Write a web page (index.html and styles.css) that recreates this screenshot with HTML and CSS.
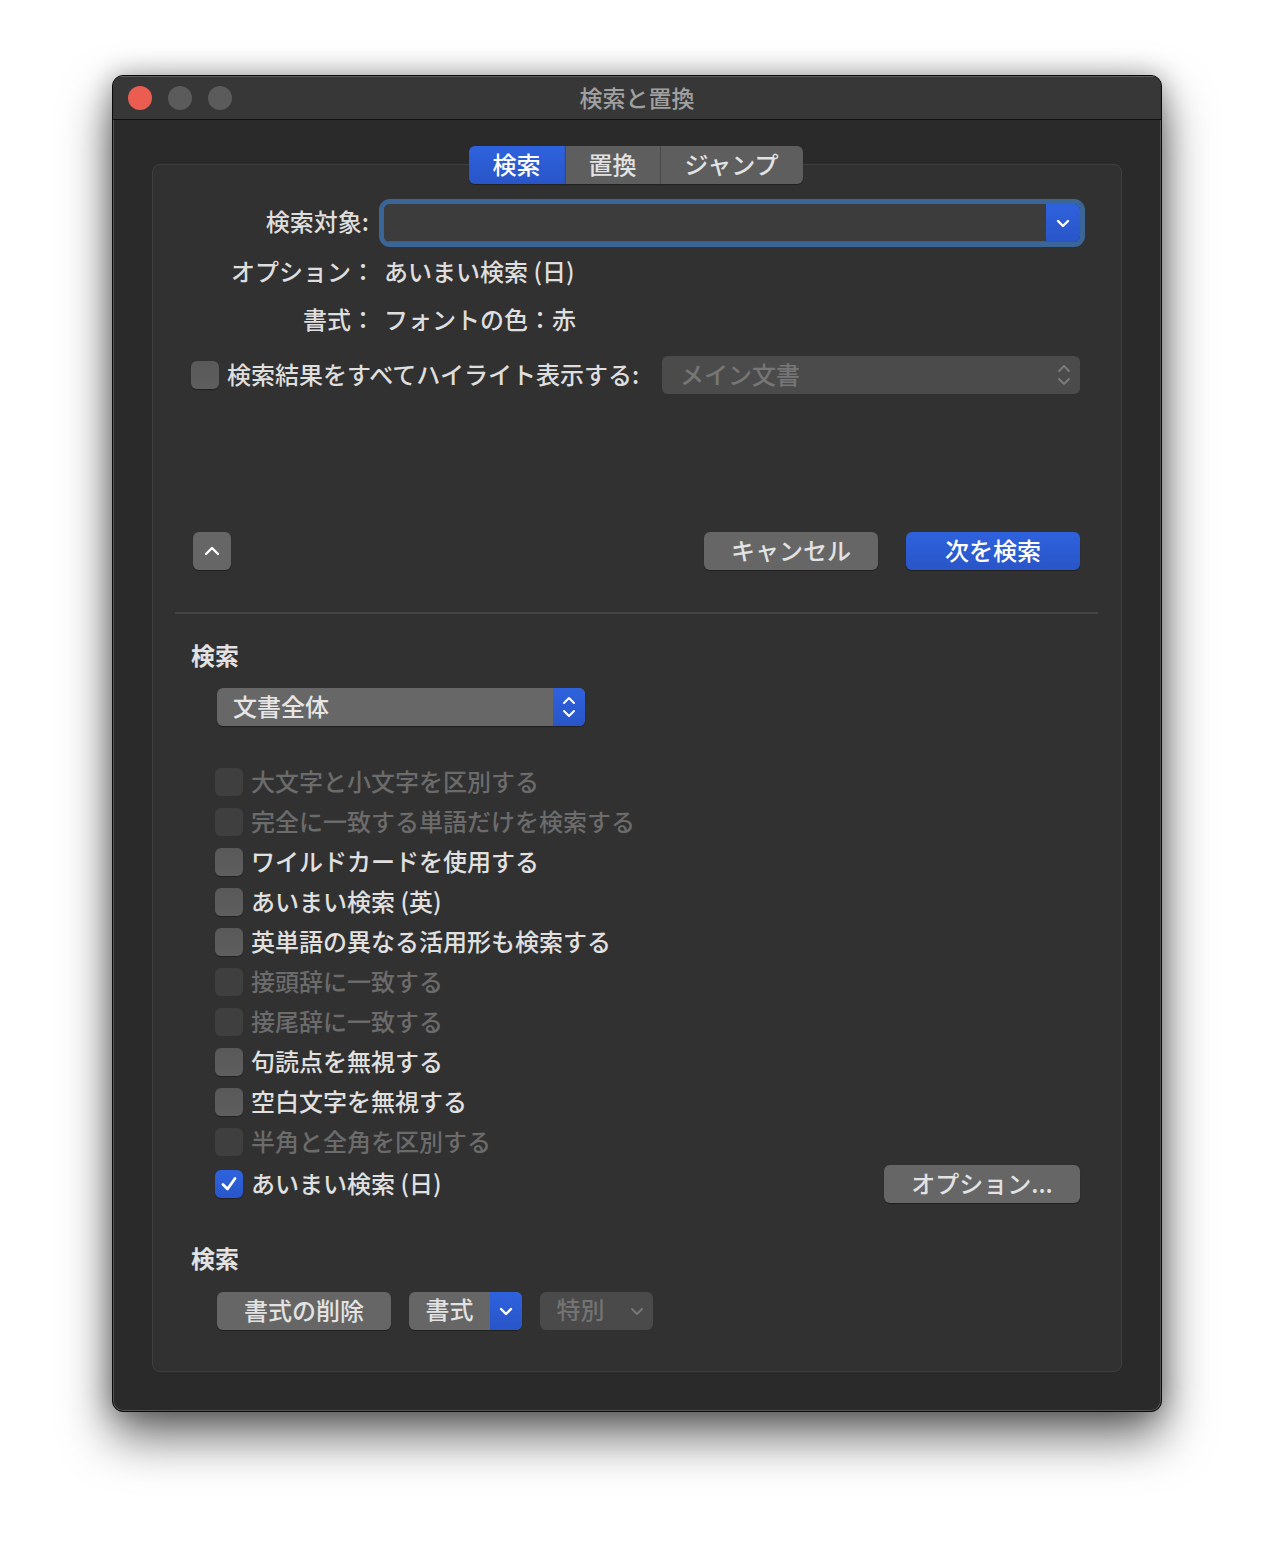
FILE: index.html
```html
<!DOCTYPE html>
<html lang="ja">
<head>
<meta charset="utf-8">
<title>検索と置換</title>
<link rel="stylesheet" href="styles.css">
</head>
<body>
<div class="window">
  <header class="titlebar">
    <div class="lights">
      <span class="light close"></span>
      <span class="light"></span>
      <span class="light"></span>
    </div>
    <div class="title">検索と置換</div>
    <div></div>
  </header>
  <main class="content">
    <section class="panel">
      <nav class="tabs">
        <span class="tab tab-find active">検索</span>
        <span class="tab tab-replace">置換</span>
        <span class="tab tab-jump">ジャンプ</span>
      </nav>

      <div class="form">
        <span class="flabel">検索対象:</span>
        <div class="combo">
          <div class="combo-field"></div>
          <div class="combo-btn">
            <svg width="14" height="9" viewBox="0 0 14 9"><path d="M2 2 L7 7 L12 2" fill="none" stroke="#fff" stroke-width="2.4" stroke-linecap="round" stroke-linejoin="round"/></svg>
          </div>
        </div>
        <span class="flabel flabel-full">オプション：</span>
        <span class="fval">あいまい検索 (日)</span>
        <span class="flabel flabel-full">書式：</span>
        <span class="fval">フォントの色：赤</span>
      </div>

      <div class="hlrow">
        <span class="cb"></span>
        <span class="hl-label">検索結果をすべてハイライト表示する:</span>
        <div class="popup popup-disabled">
          <span>メイン文書</span>
          <svg class="updown" width="16" height="26" viewBox="0 0 16 26"><path d="M3 9 L8 4 L13 9 M3 17 L8 22 L13 17" fill="none" stroke="#7a7a7a" stroke-width="2" stroke-linecap="round" stroke-linejoin="round"/></svg>
        </div>
      </div>

      <div class="actions">
        <button class="btn btn-icon">
          <svg width="16" height="10" viewBox="0 0 16 10"><path d="M2 8 L8 2 L14 8" fill="none" stroke="#fff" stroke-width="2.4" stroke-linecap="round" stroke-linejoin="round"/></svg>
        </button>
        <div class="spacer"></div>
        <button class="btn btn-wide">キャンセル</button>
        <button class="btn btn-wide btn-primary">次を検索</button>
      </div>

      <div class="sep"></div>

      <h3 class="heading">検索</h3>
      <div class="popup popup-scope">
        <span>文書全体</span>
        <span class="popup-arrow">
          <svg width="16" height="26" viewBox="0 0 16 26"><path d="M3 9 L8 4 L13 9 M3 17 L8 22 L13 17" fill="none" stroke="#fff" stroke-width="2" stroke-linecap="round" stroke-linejoin="round"/></svg>
        </span>
      </div>

      <ul class="opts">
        <li class="opt disabled"><span class="cb"></span><span class="opt-text">大文字と小文字を区別する</span></li>
        <li class="opt disabled"><span class="cb"></span><span class="opt-text">完全に一致する単語だけを検索する</span></li>
        <li class="opt"><span class="cb"></span><span class="opt-text">ワイルドカードを使用する</span></li>
        <li class="opt"><span class="cb"></span><span class="opt-text">あいまい検索 (英)</span></li>
        <li class="opt"><span class="cb"></span><span class="opt-text">英単語の異なる活用形も検索する</span></li>
        <li class="opt disabled"><span class="cb"></span><span class="opt-text">接頭辞に一致する</span></li>
        <li class="opt disabled"><span class="cb"></span><span class="opt-text">接尾辞に一致する</span></li>
        <li class="opt"><span class="cb"></span><span class="opt-text">句読点を無視する</span></li>
        <li class="opt"><span class="cb"></span><span class="opt-text">空白文字を無視する</span></li>
        <li class="opt disabled"><span class="cb"></span><span class="opt-text">半角と全角を区別する</span></li>
        <li class="opt opt-last">
          <span class="cb checked">
            <svg width="22" height="22" viewBox="0 0 22 22"><path d="M5 11.5 L9.5 16 L17 5.5" fill="none" stroke="#fff" stroke-width="2.8" stroke-linecap="round" stroke-linejoin="round"/></svg>
          </span><span class="opt-text">あいまい検索 (日)</span>
          <button class="btn btn-options">オプション...</button>
        </li>
      </ul>

      <h3 class="heading heading-2">検索</h3>
      <div class="fmt">
        <button class="btn btn-wide">書式の削除</button>
        <div class="split">
          <span class="split-text">書式</span>
          <span class="split-arrow">
            <svg width="14" height="9" viewBox="0 0 14 9"><path d="M2 2 L7 7 L12 2" fill="none" stroke="#fff" stroke-width="2.4" stroke-linecap="round" stroke-linejoin="round"/></svg>
          </span>
        </div>
        <div class="split split-disabled">
          <span class="split-text">特別</span>
          <span class="split-arrow">
            <svg width="14" height="9" viewBox="0 0 14 9"><path d="M2 2 L7 7 L12 2" fill="none" stroke="#777" stroke-width="2" stroke-linecap="round" stroke-linejoin="round"/></svg>
          </span>
        </div>
      </div>
    </section>
  </main>
</div>
</body>
</html>
```

FILE: styles.css
```css
* { box-sizing: border-box; }

html { background: #ffffff; }

body {
  margin: 0;
  background: #ffffff;
  font-family: "Noto Sans CJK JP", "Noto Sans", sans-serif;
  font-weight: 500;
  color: #dedede;
  padding: 75px 0 148px 112px;
}

.window {
  width: 1050px;
  background: #2a2a2a;
  border: 1px solid #0a0a0a;
  border-radius: 11px;
  overflow: hidden;
  box-shadow: 0 24px 50px rgba(0, 0, 0, 0.6), 0 0 26px rgba(0, 0, 0, 0.3), inset 0 0 0 1px rgba(255, 255, 255, 0.2);
}

.titlebar {
  height: 44px;
  background: #373737;
  border-bottom: 1px solid #101010;
  box-shadow: inset 0 1px 0 rgba(255, 255, 255, 0.2);
  display: grid;
  grid-template-columns: 1fr auto 1fr;
  align-items: center;
}

.lights {
  display: flex;
  gap: 16px;
  padding-left: 15px;
}

.light {
  width: 24px;
  height: 24px;
  border-radius: 50%;
  background: #5b5b5b;
}

.light.close { background: #ec5d51; }

.title {
  font-size: 23px;
  color: #a0a0a0;
  line-height: 42px;
  padding-bottom: 2px;
}

.content {
  padding: 44px 39px 39px 39px;
}

.panel {
  background: #313131;
  border: 1px solid #3f3f3f;
  border-radius: 8px;
  padding: 0 41px 41px 38px;
}

.tabs {
  display: flex;
  justify-content: center;
  margin-top: -19px;
}

.tab {
  height: 38px;
  line-height: 36px;
  text-align: center;
  font-size: 24px;
  background: #5e5e5e;
  color: #e2e2e2;
  box-shadow: 0 1px 1px rgba(0, 0, 0, 0.3);
}

.tab-find {
  width: 96px;
  border-radius: 6px 0 0 6px;
}
.tab-replace {
  width: 95px;
  border-left: 1px solid #4a4a4a;
}
.tab-jump {
  width: 143px;
  border-left: 1px solid #4a4a4a;
  border-radius: 0 6px 6px 0;
}
.tab.active {
  background: linear-gradient(#2e62dd, #2955c8);
  color: #ffffff;
}

.form {
  margin-top: 20px;
  display: grid;
  grid-template-columns: 178px 1fr;
  grid-template-rows: 38px 34px 34px;
  column-gap: 15px;
  row-gap: 14px;
  align-items: center;
  font-size: 24px;
  line-height: 30px;
}

.flabel {
  text-align: right;
  white-space: nowrap;
  padding-bottom: 4px;
}

.flabel-full { margin-right: -6px; }

.fval { padding-bottom: 4px; }

.combo {
  height: 38px;
  display: flex;
  border-radius: 6px;
  box-shadow: 0 0 0 5px #3b6597;
  overflow: hidden;
}

.combo-field {
  flex: 1;
  background: #3c3c3c;
  border-bottom: 1px solid #595959;
}

.combo-btn {
  width: 34px;
  background: linear-gradient(#2e62dd, #2955c8);
  display: flex;
  align-items: center;
  justify-content: center;
}

.hlrow {
  margin-top: 18px;
  height: 38px;
  display: flex;
  align-items: center;
  font-size: 24px;
}

.hl-label {
  margin-left: 8px;
  white-space: nowrap;
  padding-bottom: 4px;
}

.cb {
  width: 28px;
  height: 28px;
  flex: none;
  border-radius: 6px;
  background: linear-gradient(#595959, #5e5e5e);
  box-shadow: 0 1px 1px rgba(0, 0, 0, 0.35);
  display: inline-flex;
  align-items: center;
  justify-content: center;
}

.cb.checked {
  background: linear-gradient(#2f63de, #2956c9);
}

.popup {
  height: 38px;
  border-radius: 6px;
  display: flex;
  align-items: center;
  font-size: 24px;
  overflow: hidden;
}

.popup > span:first-child { padding-bottom: 4px; }

.popup-disabled {
  margin-left: auto;
  width: 418px;
  background: #4b4b4b;
  color: #767676;
  padding: 0 8px 0 18px;
  justify-content: space-between;
}

.actions {
  margin-top: 138px;
  display: flex;
  align-items: center;
  gap: 28px;
}

.spacer { flex: 1; }

.btn {
  height: 38px;
  border: none;
  border-radius: 6px;
  background: #666666;
  color: #e2e2e2;
  font-family: inherit;
  font-weight: 500;
  font-size: 24px;
  padding: 0 0 4px 0;
  box-shadow: 0 1px 1px rgba(0, 0, 0, 0.35);
  display: flex;
  align-items: center;
  justify-content: center;
}

.btn-icon {
  width: 38px;
  margin-left: 2px;
  padding: 0;
}

.btn-wide { width: 174px; }

.btn-primary {
  background: linear-gradient(#2e62dd, #2955c8);
  color: #ffffff;
}

.sep {
  margin: 42px -18px 0 -16px;
  height: 2px;
  background: #444444;
}

.heading {
  margin: 26px 0 0 0;
  font-size: 24px;
  line-height: 30px;
  font-weight: 700;
  color: #e2e2e2;
  padding-bottom: 0;
}

.popup-scope {
  margin: 18px 0 0 26px;
  width: 368px;
  background: #676767;
  color: #e6e6e6;
  padding-left: 16px;
  justify-content: space-between;
  box-shadow: 0 1px 1px rgba(0, 0, 0, 0.35);
}

.popup-arrow {
  width: 32px;
  height: 38px;
  background: linear-gradient(#2e62dd, #2955c8);
  display: flex;
  align-items: center;
  justify-content: center;
}

.opts {
  list-style: none;
  margin: 36px 0 0 0;
  padding: 0;
}

.opt {
  height: 40px;
  display: flex;
  align-items: center;
  gap: 8px;
  padding-left: 24px;
  font-size: 24px;
  color: #e0e0e0;
  white-space: nowrap;
}

.opt-text { padding-bottom: 3px; }

.opt.disabled { color: #6b6b6b; }

.opt.disabled .cb {
  background: #3f3f3f;
  box-shadow: none;
}

.opt-last { height: 44px; }

.btn-options {
  margin-left: auto;
  width: 196px;
}

.heading-2 { margin-top: 37px; }

.fmt {
  margin: 19px 0 0 26px;
  display: flex;
  gap: 18px;
}

.split {
  width: 113px;
  height: 38px;
  border-radius: 6px;
  overflow: hidden;
  display: flex;
  font-size: 24px;
  background: #666666;
  box-shadow: 0 1px 1px rgba(0, 0, 0, 0.35);
}

.split-text {
  width: 81px;
  line-height: 34px;
  text-align: center;
  color: #e2e2e2;
}

.split-arrow {
  width: 32px;
  background: linear-gradient(#2e62dd, #2955c8);
  display: flex;
  align-items: center;
  justify-content: center;
}

.split-disabled {
  background: #4a4a4a;
  box-shadow: none;
}

.split-disabled .split-text { color: #737373; }

.split-disabled .split-arrow { background: transparent; }
```
